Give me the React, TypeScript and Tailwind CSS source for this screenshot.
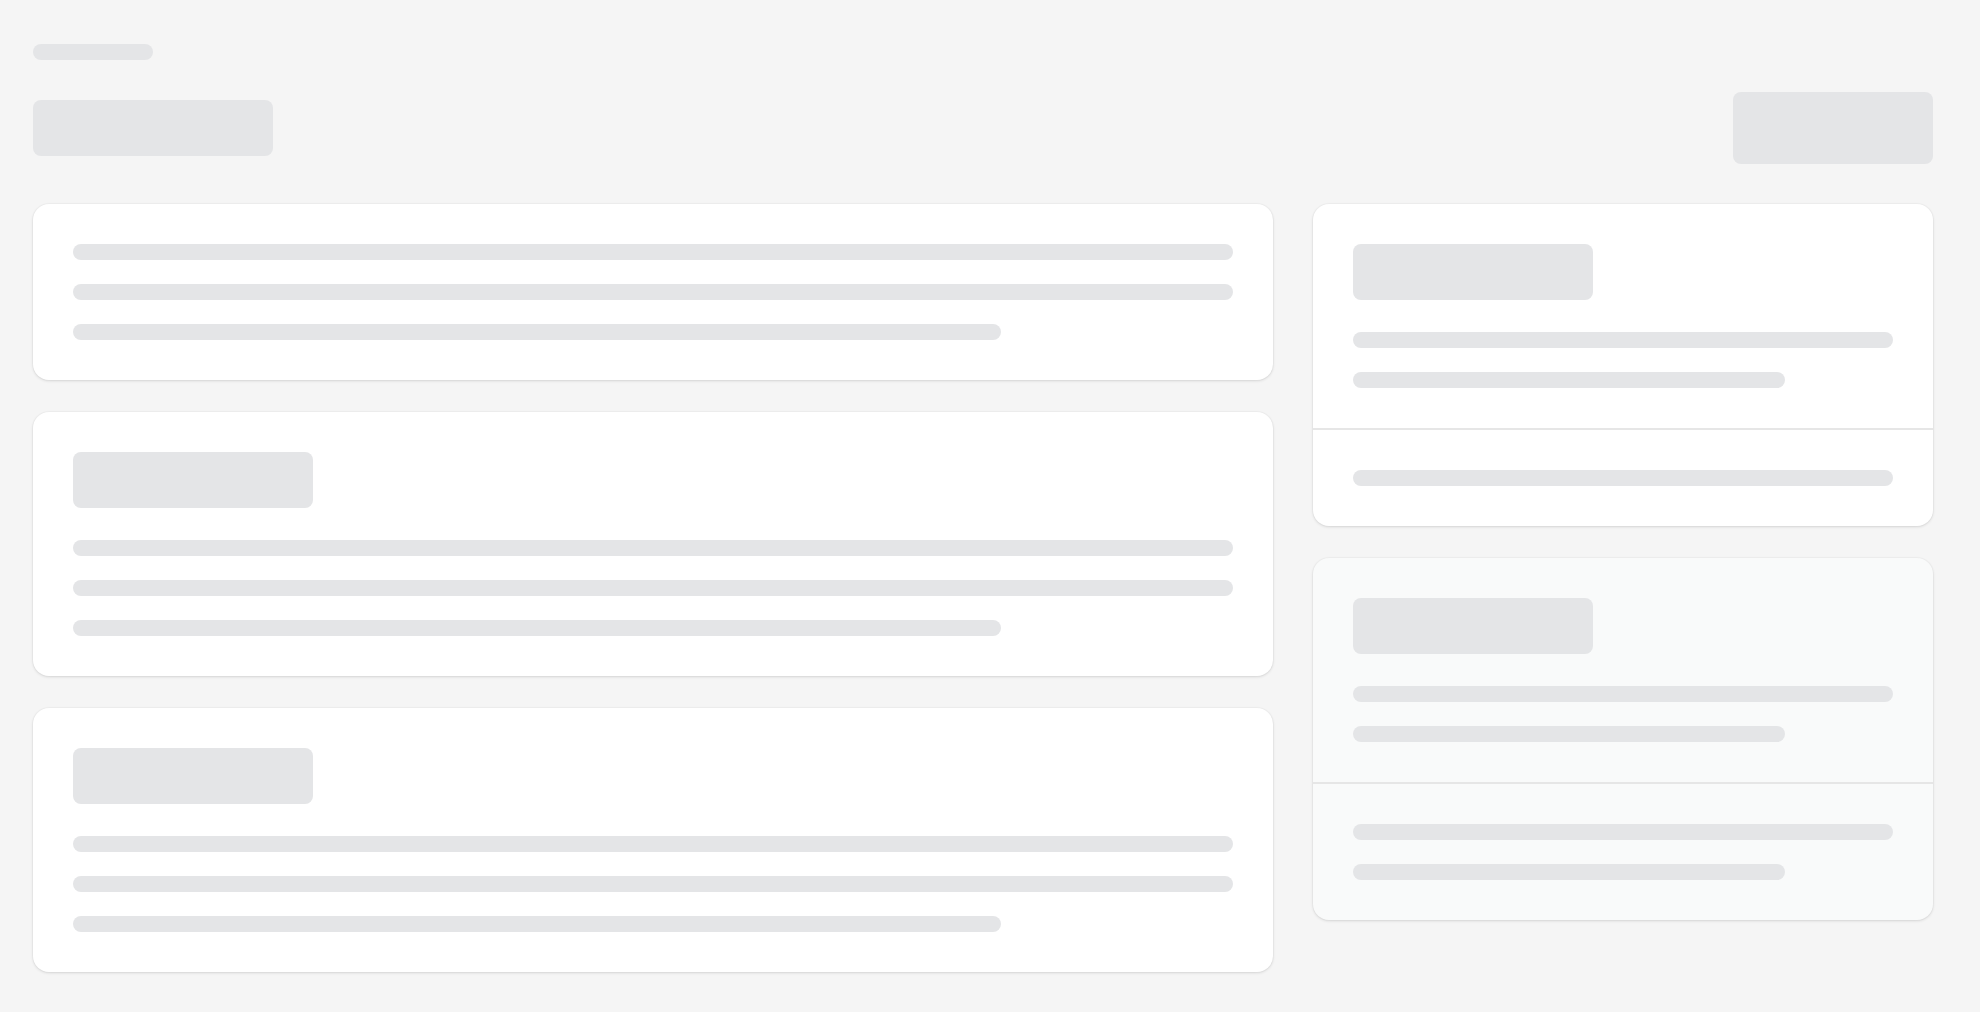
import React from "react";

const Bar = ({ className = "" }: { className?: string }) => (
  <div className={`h-4 rounded-full bg-[#e4e5e7] ${className}`} />
);

const Block = () => <div className="h-14 w-60 rounded-lg bg-[#e4e5e7]" />;

const Card = ({ children, tint = false }: { children: React.ReactNode; tint?: boolean }) => (
  <div
    className={`overflow-hidden rounded-2xl shadow-[0_1px_3px_0_rgb(0_0_0/0.12),0_0_0_1px_rgb(0_0_0/0.02)] ${
      tint ? "bg-[#f9fafa]" : "bg-white"
    }`}
  >
    {children}
  </div>
);

const LeftCard = ({ title = true }: { title?: boolean }) => (
  <Card>
    <div className="flex flex-col p-10">
      {title && <div className="mb-8"><Block /></div>}
      <div className="flex flex-col gap-6">
        <Bar />
        <Bar />
        <Bar className="w-4/5" />
      </div>
    </div>
  </Card>
);

export default function App() {
  return (
    <div className="h-screen overflow-hidden bg-[#f5f5f5] pl-[33px] pr-[47px] pt-[44px]">
      <div className="h-4 w-[120px] rounded-full bg-[#e4e5e7]" />

      <div className="mt-[32px] flex items-start justify-between">
        <div className="mt-[8px] h-14 w-60 rounded-lg bg-[#e4e5e7]" />
        <div className="h-[72px] w-[200px] rounded-lg bg-[#e4e5e7]" />
      </div>

      <div className="mt-10 grid grid-cols-[2fr_1fr] items-start gap-10">
        <div className="flex flex-col gap-8">
          <LeftCard title={false} />
          <LeftCard />
          <LeftCard />
        </div>

        <div className="flex flex-col gap-8">
          <Card>
            <div className="p-10">
              <Block />
              <div className="mt-8 flex flex-col gap-6">
                <Bar />
                <Bar className="w-4/5" />
              </div>
            </div>
            <div className="border-t-2 border-[#e6e6e6] p-10">
              <Bar />
            </div>
          </Card>

          <Card tint>
            <div className="p-10">
              <Block />
              <div className="mt-8 flex flex-col gap-6">
                <Bar />
                <Bar className="w-4/5" />
              </div>
            </div>
            <div className="border-t-2 border-[#e6e6e6] p-10">
              <div className="flex flex-col gap-6">
                <Bar />
                <Bar className="w-4/5" />
              </div>
            </div>
          </Card>
        </div>
      </div>
    </div>
  );
}
